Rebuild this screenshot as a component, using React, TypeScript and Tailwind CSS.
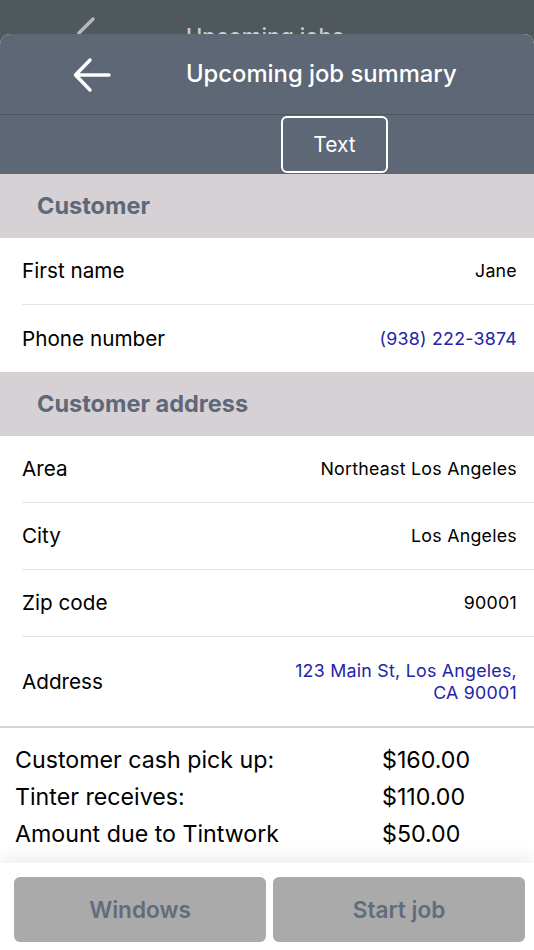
import React from "react";

const font = { fontFamily: "Inter, 'Liberation Sans', sans-serif" };

interface RowProps {
  label: string;
  value: React.ReactNode;
  link?: boolean;
  tall?: boolean;
  last?: boolean;
}

const Row = ({ label, value, link, tall, last }: RowProps) => (
  <div className={`flex pl-[22px] bg-white`}>
    <div
      className={`flex flex-1 items-center justify-between pr-[17px] ${tall ? "h-[89px]" : "h-[67px]"} ${
        last ? "" : "border-b border-[#e4e4e6]"
      }`}
    >
      <span className="text-[20.7px] text-black">{label}</span>
      <span className={`text-[17.8px] tracking-[0.25px] text-right leading-[22px] ${link ? "text-[#2323a8]" : "text-black"}`}>
        {value}
      </span>
    </div>
  </div>
);

const Section = ({ title }: { title: string }) => (
  <div className="h-[64px] bg-[#d6d1d4] flex items-center pl-[37px]">
    <span className="text-[23.5px] font-bold text-[#5f6878]">{title}</span>
  </div>
);

export default function App() {
  return (
    <div className="w-[534px] h-[950px] bg-[#4f585d] flex flex-col overflow-hidden" style={font}>
      {/* page behind the sheet */}
      <div className="h-[34px] relative overflow-hidden">
        <svg className="absolute left-[74px] top-[17px]" width="24" height="30" viewBox="0 0 24 30">
          <path d="M19 2 L5 16" stroke="#b5b8ba" strokeWidth="3.5" strokeLinecap="round" fill="none" />
        </svg>
        <div className="absolute left-[186px] top-[20px] text-[22px] font-medium text-[#c9ccce]">Upcoming jobs</div>
      </div>

      <div className="flex-1 flex flex-col rounded-t-[10px] overflow-hidden bg-white">
        <div className="bg-[#5d6775]">
          <div className="h-[81px] flex items-center border-b border-[#4c5663] relative">
            <svg className="absolute left-[72px] top-[22px]" width="40" height="38" viewBox="0 0 40 38">
              <path d="M37 19 H4 M18 4 L3.5 19 L18 34" stroke="white" strokeWidth="3.5" strokeLinecap="round" strokeLinejoin="round" fill="none" />
            </svg>
            <span className="ml-[186px] text-[23.8px] font-medium text-white">Upcoming job summary</span>
          </div>
          <div className="h-[59px] flex items-end pl-[281px]">
            <div className="w-[107px] h-[57px] border-2 border-white rounded-[6px] flex items-center justify-center text-white text-[21px] mb-[1px]">
              Text
            </div>
          </div>
        </div>

        <Section title="Customer" />
        <Row label="First name" value="Jane" />
        <Row label="Phone number" value="(938) 222-3874" link last />
        <Section title="Customer address" />
        <Row label="Area" value="Northeast Los Angeles" />
        <Row label="City" value="Los Angeles" />
        <Row label="Zip code" value="90001" />
        <Row
          label="Address"
          value={
            <>
              123 Main St, Los Angeles,
              <br />
              CA 90001
            </>
          }
          link
          tall
          last
        />
        <div className="h-[2px] bg-[#d4d4d6]" />

        <div className="flex-1 bg-white flex flex-col">
          <div className="pl-[15px] pt-[14px] text-[23.2px] text-black leading-[37px]">
            <div className="flex"><span className="w-[367px]">Customer cash pick up:</span><span>$160.00</span></div>
            <div className="flex"><span className="w-[367px]">Tinter receives:</span><span>$110.00</span></div>
            <div className="flex"><span className="w-[367px]">Amount due to Tintwork</span><span>$50.00</span></div>
          </div>
          <div className="mt-auto pl-[14px] pr-[9px] pt-[14px] pb-[8px] grid grid-cols-2 gap-[7px] shadow-[0_-8px_14px_rgba(0,0,0,0.06)]">
            <div className="h-[65px] bg-[#aaaaaa] rounded-[6px] flex items-center justify-center text-[22.6px] font-semibold text-[#636c7c]">
              Windows
            </div>
            <div className="h-[65px] bg-[#aaaaaa] rounded-[6px] flex items-center justify-center text-[22.6px] font-semibold text-[#636c7c]">
              Start job
            </div>
          </div>
        </div>
      </div>
    </div>
  );
}
